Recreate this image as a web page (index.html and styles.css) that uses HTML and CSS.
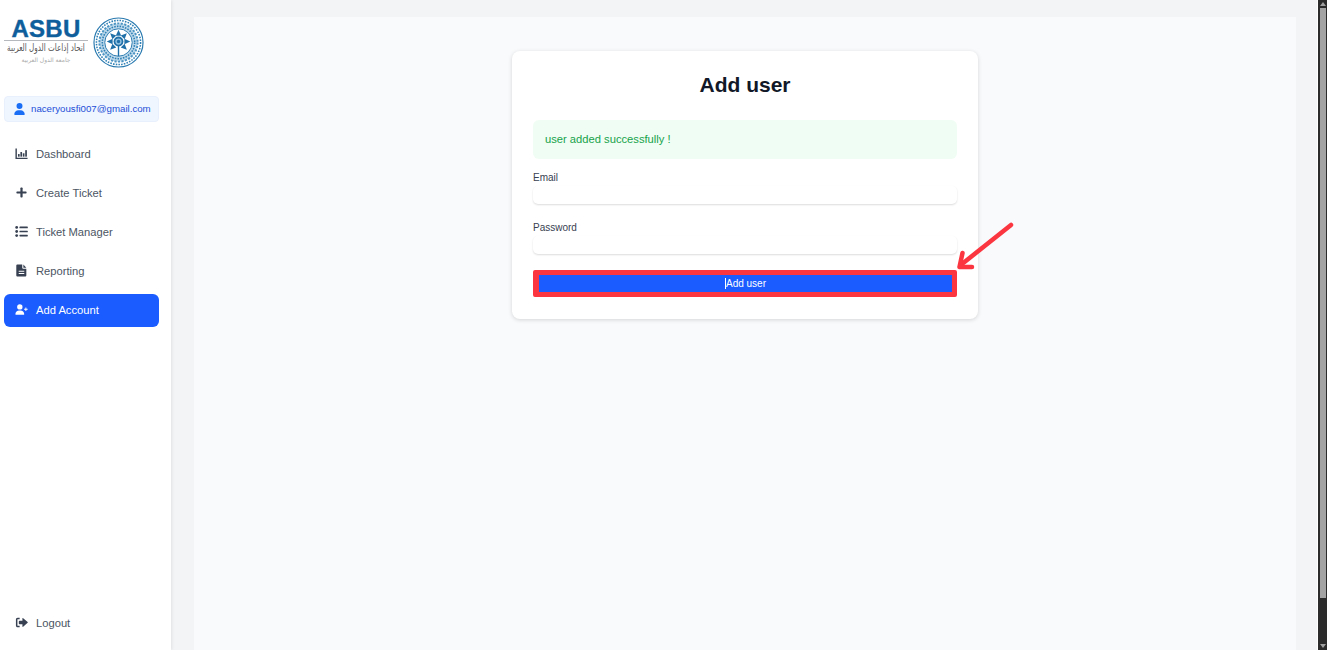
FILE: index.html
```html
<!DOCTYPE html>
<html lang="en">
<head>
    <meta charset="UTF-8">
    <meta name="viewport" content="width=device-width, initial-scale=1.0">
    <title>Add user</title>
    <link rel="stylesheet" href="styles.css">
</head>
<body>

<aside class="sidebar">
    <div class="logo">
        <div class="logo-text">
            <div class="logo-name">ASBU</div>
            <div class="logo-rule"></div>
            <div class="logo-arabic" lang="ar" dir="rtl">اتحاد إذاعات الدول العربية</div>
            <div class="logo-sub" lang="ar" dir="rtl">جامعة الدول العربية</div>
        </div>
        <svg class="seal" viewBox="0 0 52 52">
            <circle cx="26" cy="26" r="19.500" fill="#bcd8ea"/>
            <circle cx="26" cy="26" r="25" fill="none" stroke="#2a7ab0" stroke-width="1.200"/>
            <circle cx="26" cy="26" r="22.500" fill="none" stroke="#2f80b5" stroke-width="1.600" stroke-dasharray="1.600 1.200"/>
            <circle cx="26" cy="26" r="19.500" fill="none" stroke="#4a93c2" stroke-width="2" stroke-dasharray="2.200 1.400"/>
            <circle cx="26" cy="26" r="16.500" fill="none" stroke="#2f80b5" stroke-width="1.600" stroke-dasharray="1.600 1.200"/>
            <circle cx="26" cy="26" r="14" fill="#fff" stroke="#2a7ab0" stroke-width="1"/>
            <g fill="#1f6fa8">
                <path d="M23.200 19L26 13L28.800 19z"/>
                <path d="M23.200 19L26 13L28.800 19z" transform="rotate(45 26 25)"/>
                <path d="M23.200 19L26 13L28.800 19z" transform="rotate(90 26 25)"/>
                <path d="M23.200 19L26 13L28.800 19z" transform="rotate(135 26 25)"/>
                <path d="M23.200 19L26 13L28.800 19z" transform="rotate(225 26 25)"/>
                <path d="M23.200 19L26 13L28.800 19z" transform="rotate(270 26 25)"/>
                <path d="M23.200 19L26 13L28.800 19z" transform="rotate(315 26 25)"/>
                <rect x="25.300" y="28" width="1.400" height="12"/>
                <circle cx="26" cy="25" r="5"/>
            </g>
            <circle cx="26" cy="25" r="3.200" fill="#8fc0e0"/>
            <circle cx="26" cy="25" r="1.700" fill="#1f6fa8"/>
        </svg>
    </div>

    <div class="user-box">
        <svg class="icon user-icon" viewBox="0 0 448 512"><path d="M224 256A128 128 0 1 0 224 0a128 128 0 1 0 0 256zm-45.700 48C79.800 304 0 383.800 0 482.300C0 498.700 13.300 512 29.700 512H418.300c16.400 0 29.700-13.300 29.700-29.700C448 383.800 368.200 304 269.700 304H178.300z"/></svg>
        <span>naceryousfi007@gmail.com</span>
    </div>

    <nav class="nav">
        <a class="nav-item" href="#">
            <svg class="icon" viewBox="0 0 14 14"><path d="M.5 1.500v11.500h13v-1.500H2v-10z"/><rect x="3.200" y="7.600" width="1.800" height="2.800"/><rect x="5.800" y="5.400" width="1.800" height="5"/><rect x="8.400" y="6.800" width="1.800" height="3.600"/><rect x="11" y="3.400" width="1.800" height="7"/></svg>
            Dashboard
        </a>
        <a class="nav-item" href="#">
            <svg class="icon" viewBox="0 0 14 14"><rect x="5.800" y="1.500" width="2.400" height="11" rx=".8"/><rect x="1.500" y="5.800" width="11" height="2.400" rx=".8"/></svg>
            Create Ticket
        </a>
        <a class="nav-item" href="#">
            <svg class="icon" viewBox="0 0 14 14"><circle cx="1.800" cy="2.600" r="1.500"/><circle cx="1.800" cy="7" r="1.500"/><circle cx="1.800" cy="11.400" r="1.500"/><rect x="4.800" y="1.700" width="9" height="1.800" rx=".6"/><rect x="4.800" y="6.100" width="9" height="1.800" rx=".6"/><rect x="4.800" y="10.500" width="9" height="1.800" rx=".6"/></svg>
            Ticket Manager
        </a>
        <a class="nav-item" href="#">
            <svg class="icon" viewBox="0 0 14 14"><path fill-rule="evenodd" d="M2.400 .6h5.400v3.400c0 .6.400 1 1 1h3.400v7.400c0 .6-.4 1-1 1H2.400c-.6 0-1-.4-1-1V1.600c0-.6.400-1 1-1zM9 .6l3.200 3.400H9zM4 7.400v1h6v-1zM4 9.800v1h6v-1z"/></svg>
            Reporting
        </a>
        <a class="nav-item active" href="#">
            <svg class="icon" viewBox="0 0 14 14"><circle cx="5.200" cy="4.200" r="2.900"/><path d="M.4 12.200c0-2.700 2-4.200 4-4.200h1.600c2 0 4 1.500 4 4.200 0 .3-.2.500-.5.500H.9c-.3 0-.5-.2-.5-.5z"/><path d="M11.200 4.800h1v1.400h1.400v1h-1.400v1.400h-1V7.200H9.800v-1h1.400z"/></svg>
            Add Account
        </a>
    </nav>

    <a class="nav-item logout" href="#">
        <svg class="icon" viewBox="0 0 14 14"><path d="M5 1.800H3C1.700 1.800 1 2.600 1 3.800v6.400c0 1.200.7 2 2 2h2v-1.600H3c-.3 0-.4-.2-.4-.4V3.800c0-.2.100-.4.400-.4h2z"/><path d="M8.800 2.400c-.3-.3-.8-.1-.8.300v2.400H4.800c-.4 0-.7.300-.7.700v2.400c0 .4.300.7.700.7H8v2.400c0 .4.500.6.800.3l4.800-4.400c.3-.2.300-.6 0-.8z"/></svg>
        Logout
    </a>
</aside>

<main class="main">
    <section class="panel">
        <div class="card">
            <h2>Add user</h2>
            <div class="alert">user added successfully !</div>
            <div class="form-group">
                <label for="email">Email</label>
                <input type="text" id="email">
            </div>
            <div class="form-group">
                <label for="password">Password</label>
                <input type="password" id="password">
            </div>
            <button class="submit"><span class="caret">Add user</span></button>

            <svg class="arrow" viewBox="0 0 60 50" width="60" height="50">
                <path d="M56 5L7 44" stroke="#fb3640" stroke-width="4.500" stroke-linecap="round" fill="none"/>
                <path d="M7.500 33L4.500 47H17" stroke="#fb3640" stroke-width="4.500" stroke-linecap="round" stroke-linejoin="round" fill="none"/>
            </svg>
        </div>
    </section>
</main>

<div class="scrollbar">
    <span class="arrow-up"></span>
    <span class="thumb"></span>
    <span class="arrow-down"></span>
</div>

</body>
</html>
```

FILE: styles.css
```css
* {
    box-sizing: border-box;
}

html,
body {
    height: 100%;
}

body {
    margin: 0;
    display: flex;
    height: 100vh;
    overflow: hidden;
    font-family: "Liberation Sans", Arial, sans-serif;
    background-color: #f3f4f6;
}

.sidebar {
    width: 171px;
    flex-shrink: 0;
    display: flex;
    flex-direction: column;
    padding: 0 12px 10px 4px;
    background-color: #fff;
    box-shadow: 1px 0 3px rgba(0, 0, 0, 0.08);
}

.logo {
    height: 96px;
    display: flex;
    align-items: flex-start;
    gap: 5px;
    padding-top: 16px;
}

.logo-text {
    width: 84px;
    text-align: center;
}

.logo-name {
    margin-top: 2px;
    font-size: 24px;
    line-height: 22px;
    font-weight: bold;
    color: #0f5e9c;
    letter-spacing: 0.3px;
    -webkit-text-stroke: 0.4px #0f5e9c;
}

.logo-rule {
    height: 1px;
    background-color: #b5b9bd;
}

.logo-arabic {
    width: 116px;
    margin-left: -16px;
    font-family: "DejaVu Sans", sans-serif;
    font-size: 10px;
    line-height: 14px;
    white-space: nowrap;
    color: #555;
    transform: scaleX(0.72);
}

.logo-sub {
    margin-top: 1px;
    font-family: "DejaVu Sans", sans-serif;
    font-size: 6px;
    line-height: 8px;
    color: #aaa;
}

.seal {
    width: 51px;
    height: 51px;
    flex-shrink: 0;
    margin-top: 1px;
}

.user-box {
    height: 26px;
    display: flex;
    align-items: center;
    gap: 6px;
    padding: 0 0 1px 9px;
    margin-bottom: 16px;
    font-size: 9.7px;
    color: #1d4ed8;
    background-color: #eff6ff;
    border: 1px solid #e8f0fd;
    border-radius: 4px;
    white-space: nowrap;
}

.icon {
    width: 13px;
    height: 13px;
    flex-shrink: 0;
    fill: currentColor;
}

.user-icon {
    width: 11px;
    height: 12px;
    color: #1a6ef5;
}

.nav {
    display: flex;
    flex-direction: column;
    gap: 6px;
}

.nav-item {
    height: 33px;
    display: flex;
    align-items: center;
    gap: 8px;
    padding: 0 0 2px 11px;
    font-size: 11.2px;
    color: #4b5563;
    text-decoration: none;
    border-radius: 6px;
}

.nav-item .icon {
    color: #374151;
}

.nav-item.active {
    color: #fff;
    background-color: #1a5cff;
}

.nav-item.active .icon {
    color: #fff;
}

.logout {
    margin-top: auto;
}

.main {
    flex: 1;
    min-width: 0;
    padding: 17px 21px 0 23px;
    border-right: 1px solid #fff;
}

.panel {
    height: 100%;
    padding-top: 34px;
    background-color: #f9fafb;
}

.card {
    position: relative;
    width: 466px;
    height: 268px;
    margin: 0 auto;
    padding: 22px 21px;
    background-color: #fff;
    border-radius: 8px;
    box-shadow: 0 1px 4px rgba(0, 0, 0, 0.15);
}

.card h2 {
    margin: 0 0 23px;
    font-size: 21px;
    line-height: 24px;
    text-align: center;
    color: #111827;
}

.alert {
    height: 39px;
    display: flex;
    align-items: center;
    padding: 0 0 1px 12px;
    margin-bottom: 13px;
    font-size: 11.2px;
    color: #16a34a;
    background-color: #f0fdf4;
    border-radius: 6px;
}

.form-group {
    margin-bottom: 18px;
}

.form-group label {
    display: block;
    height: 14px;
    font-size: 10px;
    line-height: 12px;
    color: #374151;
}

.form-group input {
    display: block;
    width: 100%;
    height: 18px;
    padding: 0 6px;
    border: 0;
    border-radius: 5px;
    background-color: #fff;
    box-shadow: 0 1px 2px rgba(0, 0, 0, 0.14);
}

.submit {
    display: block;
    width: 100%;
    height: 27px;
    margin-top: -2px;
    padding: 0;
    font-family: inherit;
    font-size: 10px;
    color: #fff;
    background-color: #1a5cff;
    border: 5px solid #fb3640;
    border-left-width: 6px;
    border-radius: 2px;
}

.caret {
    border-left: 1px solid #fff;
}

.arrow {
    position: absolute;
    left: 443px;
    top: 169px;
}

.scrollbar {
    width: 9px;
    flex-shrink: 0;
    display: flex;
    flex-direction: column;
    align-items: center;
    background-color: #2b2b2b;
}

.arrow-up,
.arrow-down {
    width: 0;
    height: 0;
    border-left: 3px solid transparent;
    border-right: 3px solid transparent;
}

.arrow-up {
    margin-top: 2px;
    border-bottom: 4px solid #a0a0a0;
}

.arrow-down {
    margin-bottom: 2px;
    border-top: 4px solid #a0a0a0;
}

.thumb {
    flex: 1;
    width: 6px;
    margin: 2px 0 46px;
    background-color: #a3a3a3;
}
```
